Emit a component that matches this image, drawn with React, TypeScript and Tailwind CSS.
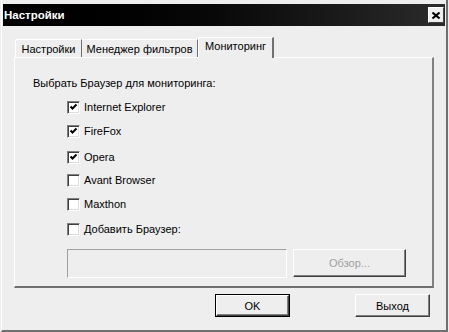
import React from "react";

const browsers = [
  { label: "Internet Explorer", checked: true, mt: "mt-[10px]" },
  { label: "FireFox", checked: true, mt: "mt-[10px]" },
  { label: "Opera", checked: true, mt: "mt-[12px]" },
  { label: "Avant Browser", checked: false, mt: "mt-[9px]" },
  { label: "Maxthon", checked: false, mt: "mt-[10px]" },
  { label: "Добавить Браузер:", checked: false, mt: "mt-[11px]" },
];

function CheckBox({ checked }: { checked: boolean }) {
  return (
    <span className="w-[13px] h-[13px] flex items-center justify-center bg-white border border-t-[#808080] border-l-[#808080] border-r-white border-b-white shadow-[inset_1px_1px_0_#404040,inset_-1px_-1px_0_#dcdcdc]">
      {checked && (
        <svg width="9" height="9" viewBox="0 0 9 9">
          <path d="M1.5 3.5 L3.5 5.5 L7.5 1.5" fill="none" stroke="#000" strokeWidth="2" />
        </svg>
      )}
    </span>
  );
}

function Button({ children, def, disabled, className }: { children: React.ReactNode; def?: boolean; disabled?: boolean; className?: string }) {
  return (
    <div className={`${className} ${def ? "border border-black" : ""} flex`}>
      <div className="flex-1 flex items-center justify-center bg-[#eeeeee] border border-t-white border-l-white border-r-[#404040] border-b-[#404040] shadow-[inset_-1px_-1px_0_#808080]">
        <span className={disabled ? "text-[#a0a0a0]" : "text-black"}>{children}</span>
      </div>
    </div>
  );
}

export default function App() {
  return (
    <div className="w-[449px] h-[332px] bg-[#eeeeee] overflow-hidden text-[11px] leading-[14px] text-black font-['Liberation_Sans',Arial,sans-serif]">
      <div className="ml-[1px] w-[447px] h-[332px] border-l border-white border-r-2 border-r-[#707070] border-b-2 border-b-[#707070] pt-[4px] flex flex-col">
        {/* title bar */}
        <div className="ml-[1px] w-[442px] h-[22px] bg-gradient-to-r from-black to-[#2b2b2b] flex items-center justify-between pl-[1px] pr-[1px]">
          <span className="text-white font-bold text-[11.5px]">Настройки</span>
          <div className="w-[16px] h-[16px] bg-[#eeeeee] border border-t-white border-l-white border-r-[#404040] border-b-[#404040] flex items-center justify-center">
            <svg width="8" height="7" viewBox="0 0 8 7">
              <path d="M0.5 0.5 L7.5 6.5 M7.5 0.5 L0.5 6.5" stroke="#000" strokeWidth="2" />
            </svg>
          </div>
        </div>

        {/* tabs */}
        <div className="mt-[11px] ml-[13px] flex items-end relative z-10 -mb-px h-[21px]">
          <div className="h-[18px] mb-[1px] w-[67px] flex items-center justify-center border-t border-l border-white border-r border-r-[#707070] rounded-tl-[2px]">
            Настройки
          </div>
          <div className="h-[18px] mb-[1px] w-[116px] flex items-center justify-center border-t border-white border-r border-r-[#707070]">
            Менеджер фильтров
          </div>
          <div className="h-[21px] w-[76px] pb-[4px] flex items-center justify-center bg-[#eeeeee] border-t border-l border-white border-r-2 border-r-[#707070] rounded-tl-[2px]">
            Мониторинг
          </div>
        </div>

        {/* panel */}
        <div className="ml-[12px] w-[420px] h-[231px] border-t border-l border-white border-r-2 border-r-[#808080] border-b-2 border-b-[#707070] pt-[18px] pl-[18px]">
          <div className="h-[14px]">Выбрать Браузер для мониторинга:</div>
          <div className="ml-[34px] flex flex-col">
            {browsers.map((b) => (
              <div key={b.label} className={`${b.mt} h-[14px] flex items-center gap-[4px]`}>
                <CheckBox checked={b.checked} />
                <span>{b.label}</span>
              </div>
            ))}
            <div className="mt-[13px] flex items-start gap-[6px]">
              <div className="w-[220px] h-[29px] bg-[#eeeeee] border border-t-[#a0a0a0] border-l-[#a0a0a0] border-r-white border-b-white" />
              <Button disabled className="w-[113px] h-[28px]">Обзор...</Button>
            </div>
          </div>
        </div>

        {/* bottom buttons */}
        <div className="mt-[6px] ml-[213px] flex gap-[65px]">
          <Button def className="w-[75px] h-[23px]">OK</Button>
          <Button className="w-[75px] h-[23px]">Выход</Button>
        </div>
      </div>
    </div>
  );
}
